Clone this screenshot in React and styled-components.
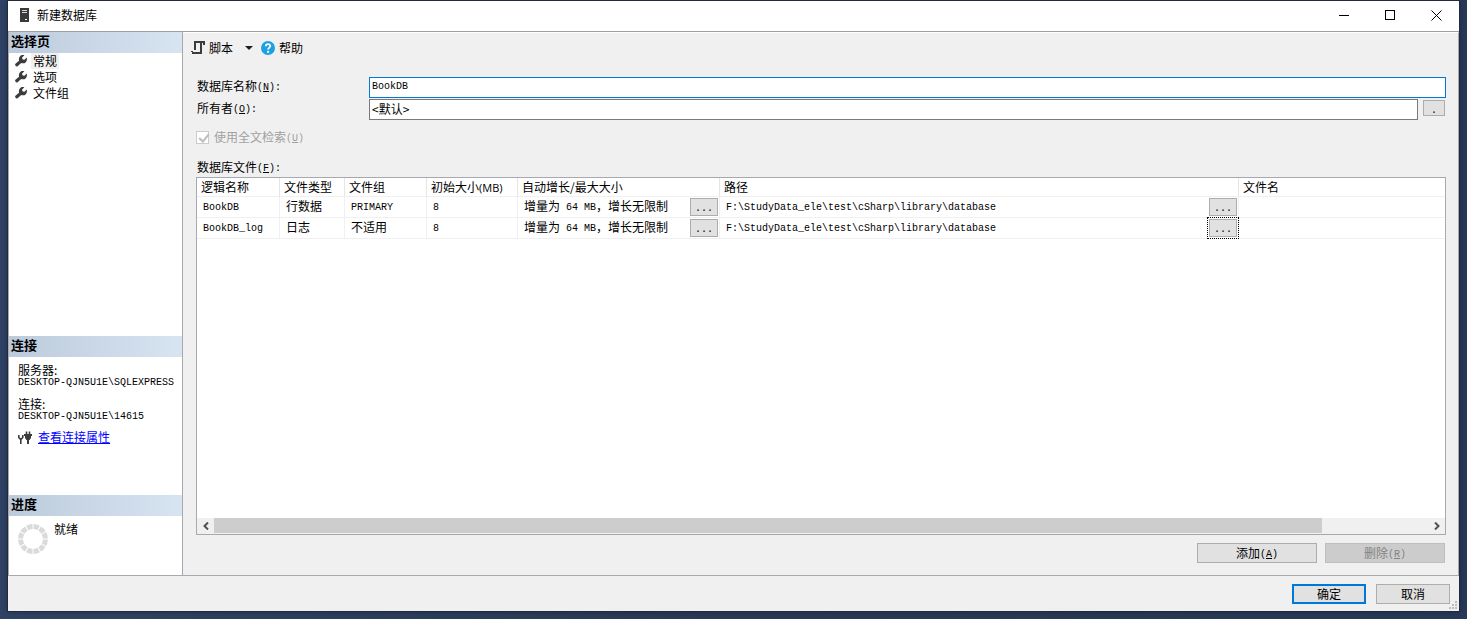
import styled, {createGlobalStyle, css} from 'styled-components';

const files = [
  {name: 'BookDB', type: '行数据', group: 'PRIMARY', groupAscii: true, size: '8', path: 'F:\\StudyData_ele\\test\\cSharp\\library\\database'},
  {name: 'BookDB_log', type: '日志', group: '不适用', size: '8', path: 'F:\\StudyData_ele\\test\\cSharp\\library\\database', focused: true},
];

const pages = ['常规', '选项', '文件组'];

const WrenchIcon = () => (
  <svg width="12" height="12" viewBox="0 0 12 12">
    <path d="M1.8 9.8 L6.5 5.6" stroke="#3c3c3c" strokeWidth="3.2" strokeLinecap="round" />
    <path d="M9.4 0.2 A4 4 0 0 0 3.9 4.2 A4 4 0 0 0 11.8 5.2 A4 4 0 0 0 11.7 2.6 L9.5 4.8 L7.4 4.4 L7.1 2.4 Z" fill="#3c3c3c" />
  </svg>
);

const ServerIcon = () => (
  <svg width="9" height="14" viewBox="0 0 9 14">
    <rect width="9" height="14" fill="#3a3a3c" />
    <path d="M2 2.5h5M2 4.5h5" stroke="#d8d8d8" />
    <rect x="5" y="11" width="2" height="1" fill="#fff" />
  </svg>
);

const ScriptIcon = () => (
  <svg width="14" height="14" viewBox="0 0 14 14" fill="none" stroke="#3c3c3c" strokeWidth="2">
    <path d="M4 9V1H13M10 1V12H1M13 0V4" />
    <path d="M0 10.5H2" strokeWidth="1" />
  </svg>
);

const HelpIcon = () => (
  <svg width="14" height="14" viewBox="0 0 14 14">
    <circle cx="7" cy="7" r="7" fill="#1ba1e2" />
    <path d="M4.8 5.2C4.8 2.4 9.4 2.5 9.3 5.1C9.3 6.6 7.1 6.7 7.1 8.6" fill="none" stroke="#fff" strokeWidth="1.8" />
    <rect x="6.1" y="9.8" width="2" height="2" fill="#fff" />
  </svg>
);

const PlugIcon = () => (
  <svg width="14" height="14" viewBox="0 0 14 14" fill="none" stroke="#3c3c3c">
    <path d="M0.8 4V6.5L2.8 8.5L4.8 6.5V4M2.8 8V13" strokeWidth="1.6" />
    <path d="M8.5 0.5V4M11.5 0.5V4" strokeWidth="1.6" />
    <path d="M6 4H14" strokeWidth="2" />
    <path d="M7.5 5H12.5V7L11 9H9L7.5 7Z" fill="#3c3c3c" />
    <path d="M10 9V13" strokeWidth="2" />
  </svg>
);

const Spinner = () => (
  <svg width="30" height="30" viewBox="0 0 30 30">
    <circle cx="15" cy="15" r="12.4" fill="none" stroke="#dadada" strokeWidth="5" pathLength="120" strokeDasharray="8.4 1.6" strokeDashoffset="-0.8" />
  </svg>
);

const App = () => (
  <>
    <GlobalStyle />
    <Desktop>
      <Dialog>
        <TitleBar>
          <ServerIcon />
          <Title>新建数据库</Title>
          <WindowButton aria-label="最小化"><svg width="11" height="11"><path d="M0 5.5h10" stroke="#000" /></svg></WindowButton>
          <WindowButton aria-label="最大化"><svg width="11" height="11"><rect x="0.5" y="0.5" width="9" height="9" fill="none" stroke="#000" /></svg></WindowButton>
          <WindowButton aria-label="关闭"><svg width="11" height="11"><path d="M0.5 0.5l10 10M10.5 0.5l-10 10" stroke="#000" /></svg></WindowButton>
        </TitleBar>
        <Body>
          <Sidebar>
            <PagesPane>
              <PaneTitle>选择页</PaneTitle>
              {pages.map((page, i) => (
                <PageItem key={page}>
                  <WrenchIcon />
                  <PageName $selected={i === 0}>{page}</PageName>
                </PageItem>
              ))}
            </PagesPane>
            <ConnectionPane>
              <PaneTitle>连接</PaneTitle>
              <Info>
                <dt>服务器:</dt>
                <dd>DESKTOP-QJN5U1E\SQLEXPRESS</dd>
                <dt>连接:</dt>
                <dd>DESKTOP-QJN5U1E\14615</dd>
              </Info>
              <LinkRow>
                <PlugIcon />
                <a href="#properties">查看连接属性</a>
              </LinkRow>
            </ConnectionPane>
            <ProgressPane>
              <PaneTitle>进度</PaneTitle>
              <Status>
                <Spinner />
                <span>就绪</span>
              </Status>
            </ProgressPane>
          </Sidebar>
          <Main>
            <Toolbar>
              <ToolButton><ScriptIcon />脚本<Caret /></ToolButton>
              <ToolButton><HelpIcon />帮助</ToolButton>
            </Toolbar>
            <Form>
              <Field>
                <label htmlFor="db-name">数据库名称<Mono>(<u>N</u>):</Mono></label>
                <TextBox id="db-name" $mono defaultValue="BookDB" />
              </Field>
              <Field>
                <label htmlFor="owner">所有者<Mono>(<u>O</u>):</Mono></label>
                <TextBox id="owner" defaultValue="<默认>" />
                <BrowseButton $small aria-label="浏览所有者">.</BrowseButton>
              </Field>
              <CheckField>
                <CheckBox id="fulltext" type="checkbox" disabled defaultChecked />
                <label htmlFor="fulltext">使用全文检索<Mono>(<u>U</u>)</Mono></label>
              </CheckField>
              <GridLabel id="files-label">数据库文件<Mono>(<u>F</u>):</Mono></GridLabel>
              <Grid>
                <FileTable aria-labelledby="files-label">
                  <colgroup>
                    <Col $w={83} />
                    <Col $w={65} />
                    <Col $w={82} />
                    <Col $w={91} />
                    <Col $w={202} />
                    <Col $w={519} />
                    <col />
                  </colgroup>
                  <thead>
                    <tr>
                      <th>逻辑名称</th>
                      <th>文件类型</th>
                      <th>文件组</th>
                      <th>初始大小<Sans>(MB)</Sans></th>
                      <th>自动增长/最大大小</th>
                      <th>路径</th>
                      <th>文件名</th>
                    </tr>
                  </thead>
                  <tbody>
                    {files.map(file => (
                      <tr key={file.name}>
                        <td><Mono>{file.name}</Mono></td>
                        <td>{file.type}</td>
                        <td>{file.groupAscii ? <Mono>{file.group}</Mono> : file.group}</td>
                        <td><Mono>{file.size}</Mono></td>
                        <td>
                          <CellRow>
                            <span>增量为<Mono> 64 MB</Mono>，增长无限制</span>
                            <BrowseButton aria-label="更改自动增长">...</BrowseButton>
                          </CellRow>
                        </td>
                        <td>
                          <CellRow>
                            <span><Mono>{file.path}</Mono></span>
                            <BrowseButton $focused={file.focused} aria-label="选择路径">...</BrowseButton>
                          </CellRow>
                        </td>
                        <td></td>
                      </tr>
                    ))}
                  </tbody>
                </FileTable>
                <ScrollBar>
                  <ScrollArrow aria-label="向左滚动"><svg width="6" height="8"><path d="M5 0.5L1.5 4L5 7.5" fill="none" stroke="#505050" strokeWidth="2" /></svg></ScrollArrow>
                  <ScrollTrack><ScrollThumb /></ScrollTrack>
                  <ScrollArrow aria-label="向右滚动"><svg width="6" height="8"><path d="M1 0.5L4.5 4L1 7.5" fill="none" stroke="#505050" strokeWidth="2" /></svg></ScrollArrow>
                </ScrollBar>
              </Grid>
              <Actions>
                <Button $wide>添加<Mono>(<u>A</u>)</Mono></Button>
                <Button $wide disabled>删除<Mono>(<u>R</u>)</Mono></Button>
              </Actions>
            </Form>
          </Main>
        </Body>
        <Footer>
          <Button $primary>确定</Button>
          <Button>取消</Button>
          <Grip width="9" height="9" viewBox="0 0 9 9">
            <path d="M7 0h2v2h-2zM4 3h2v2h-2zM7 3h2v2h-2zM1 6h2v2h-2zM4 6h2v2h-2zM7 6h2v2h-2z" fill="#bfbfbf" />
          </Grip>
        </Footer>
      </Dialog>
    </Desktop>
  </>
);

const GlobalStyle = createGlobalStyle`
  * {
    box-sizing: border-box;
  }
  body {
    margin: 0;
    color: #000;
    font: 12px/16px "Noto Sans CJK SC", sans-serif;
  }
  button, input {
    margin: 0;
    padding: 0;
    color: inherit;
    font: inherit;
  }
  svg {
    display: block;
    flex: none;
  }
`;

const Mono = styled.span`
  font-family: "Liberation Mono", monospace;
  font-size: 10px;
  line-height: 12px;
  vertical-align: 1px;
  white-space: pre;
`;

const Sans = styled.span`
  font-family: "Open Sans", sans-serif;
  font-size: 11px;
  line-height: 12px;
`;

const Desktop = styled.div`
  display: flex;
  min-height: 100vh;
  padding: 1px 8px 8px;
  background: linear-gradient(90deg, #2f4265, #2a3a55 50%, #283958);
`;

const Dialog = styled.div`
  display: flex;
  flex: 1;
  flex-direction: column;
  min-width: 0;
  background: #f0f0f0;
  box-shadow: 0 0 0 1px #222b3d, 0 0 6px rgba(0, 0, 0, 0.4);
`;

const TitleBar = styled.header`
  display: flex;
  align-items: flex-start;
  height: 31px;
  padding-left: 12px;
  background: #fff;
  border-bottom: 1px solid #a0a0a0;
  > svg {
    margin-top: 7px;
  }
`;

const Title = styled.span`
  flex: 1;
  padding-left: 8px;
  line-height: 28px;
`;

const WindowButton = styled.button`
  display: flex;
  align-items: center;
  justify-content: center;
  width: 46px;
  height: 28px;
  background: none;
  border: 0;
`;

const Body = styled.div`
  display: flex;
  flex: 1;
`;

const Sidebar = styled.aside`
  display: flex;
  flex: none;
  flex-direction: column;
  width: 175px;
  background: #fff;
  border: solid #a8a8b0;
  border-width: 0 1px;
`;

const PagesPane = styled.section`
  flex: 1;
`;

const ConnectionPane = styled.section`
  height: 159px;
`;

const ProgressPane = styled.section`
  height: 80px;
`;

const PaneTitle = styled.h2`
  height: 21px;
  margin: 0;
  padding-left: 2px;
  background: linear-gradient(90deg, #bccbdb, #d7e4f2);
  font-size: 13px;
  line-height: 18px;
`;

const PageItem = styled.div`
  display: flex;
  align-items: center;
  gap: 4px;
  height: 16px;
  padding-left: 6px;
`;

const PageName = styled.span`
  padding: 0 2px;
  line-height: 16px;
  background: ${({$selected}) => ($selected ? '#f0f0f0' : 'none')};
`;

const Info = styled.dl`
  margin: 0;
  padding: 6px 0 0 9px;
  dt {
    height: 14px;
    line-height: 14px;
  }
  dd {
    height: 12px;
    margin: 0 0 8px;
    font: 10px/12px "Liberation Mono", monospace;
    white-space: nowrap;
  }
`;

const LinkRow = styled.div`
  display: flex;
  align-items: flex-start;
  gap: 6px;
  padding-left: 9px;
  a {
    color: #0000ff;
    line-height: 12px;
  }
`;

const Status = styled.div`
  display: flex;
  gap: 6px;
  padding: 8px 0 0 9px;
  span {
    line-height: 10px;
  }
`;

const Main = styled.main`
  display: flex;
  flex: 1;
  flex-direction: column;
  min-width: 0;
  border-top: 1px solid #fff;
  border-right: 1px solid #a8a8b0;
`;

const Toolbar = styled.div`
  display: flex;
  align-items: center;
  gap: 8px;
  height: 30px;
  padding-left: 8px;
`;

const ToolButton = styled.button`
  display: flex;
  align-items: center;
  gap: 4px;
  background: none;
  border: 0;
`;

const Caret = styled.span`
  margin-left: 8px;
  border: 4px solid transparent;
  border-top-color: #1e1e1e;
  border-bottom: 0;
`;

const Form = styled.div`
  display: flex;
  flex: 1;
  flex-direction: column;
  padding: 14px 12px 12px 13px;
`;

const Field = styled.div`
  display: flex;
  align-items: flex-start;
  height: 21px;
  margin-bottom: 1px;
  label {
    flex: none;
    width: 173px;
    padding-left: 1px;
    line-height: 18px;
  }
`;

const TextBox = styled.input`
  flex: 1;
  min-width: 0;
  height: 21px;
  padding: 0 2px 3px;
  background: #fff;
  border: 1px solid #7a7a7a;
  border-radius: 0;
  ${({$mono}) => $mono && css`
    border-color: #0078d7;
    font: 10px "Liberation Mono", monospace;
  `}
`;

const BrowseButton = styled.button`
  flex: none;
  width: 28px;
  height: 18px;
  padding-top: 4px;
  background: #e1e1e1;
  border: 1px solid #adadad;
  font: 10px/12px "Liberation Mono", monospace;
  ${({$small}) => $small && css`
    width: 22px;
    height: 16px;
    margin: 1px 1px 0 5px;
  `}
  ${({$focused}) => $focused && css`
    outline: 1px dotted #000;
    outline-offset: 1px;
  `}
`;

const CheckField = styled.div`
  display: flex;
  align-items: center;
  gap: 5px;
  height: 16px;
  margin-top: 8px;
  color: #a0a0a0;
`;

const CheckBox = styled.input`
  position: relative;
  width: 13px;
  height: 13px;
  appearance: none;
  background: #fff;
  border: 1px solid #ccc;
  &:checked::after {
    position: absolute;
    top: 0;
    left: 4px;
    width: 4px;
    height: 8px;
    border: solid #bcbcbc;
    border-width: 0 2px 2px 0;
    content: '';
    transform: rotate(40deg);
  }
`;

const GridLabel = styled.div`
  height: 16px;
  margin-top: 14px;
  padding-left: 1px;
`;

const Grid = styled.div`
  display: flex;
  flex: 1;
  flex-direction: column;
  justify-content: space-between;
  margin-top: 2px;
  background: #fff;
  border: 1px solid #a8a8b0;
`;

const Col = styled.col`
  width: ${({$w}) => $w}px;
`;

const FileTable = styled.table`
  width: 100%;
  table-layout: fixed;
  border-collapse: separate;
  border-spacing: 0;
  th, td {
    padding: 0 0 0 6px;
    border: solid #f0f0f0;
    border-width: 0 1px 1px 0;
    text-align: left;
    white-space: nowrap;
  }
  th {
    height: 19px;
    padding-left: 4px;
    border-right-color: #e5e5e5;
    font-weight: normal;
  }
  td {
    height: 21px;
    padding-top: 1px;
    vertical-align: top;
  }
  th:last-child, td:last-child {
    border-right: 0;
  }
`;

const CellRow = styled.div`
  display: flex;
  align-items: flex-start;
  justify-content: space-between;
  height: 19px;
  padding-right: 1px;
`;

const ScrollBar = styled.div`
  display: flex;
  height: 16px;
  padding-bottom: 1px;
  background: #f0f0f0;
`;

const ScrollArrow = styled.button`
  display: flex;
  align-items: center;
  justify-content: center;
  width: 17px;
  background: none;
  border: 0;
`;

const ScrollTrack = styled.div`
  flex: 1;
`;

const ScrollThumb = styled.div`
  width: 91.3%;
  height: 100%;
  background: #cdcdcd;
`;

const Actions = styled.div`
  display: flex;
  justify-content: flex-end;
  gap: 8px;
  margin-top: 8px;
  padding-right: 1px;
`;

const Button = styled.button`
  width: ${({$wide}) => ($wide ? 120 : 74)}px;
  height: 20px;
  background: #e1e1e1;
  border: ${({$primary}) => ($primary ? '2px solid #0078d7' : '1px solid #adadad')};
  line-height: 16px;
  &:disabled {
    background: #ccc;
    border-color: #bfbfbf;
    color: #838383;
  }
`;

const Footer = styled.footer`
  position: relative;
  display: flex;
  justify-content: flex-end;
  gap: 10px;
  height: 36px;
  padding: 8px 9px 0 0;
  border-top: 1px solid #a8a8b0;
`;

const Grip = styled.svg`
  position: absolute;
  right: 2px;
  bottom: 1px;
`;

export default App;
